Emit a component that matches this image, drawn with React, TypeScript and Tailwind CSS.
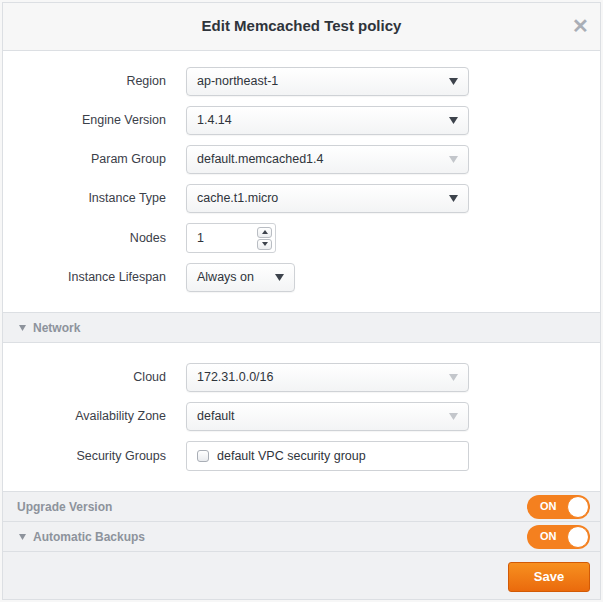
import React, { useState } from 'react';

interface FieldRow {
  label: string;
  value: string;
  disabled?: boolean;
}

const mainFields: FieldRow[] = [
  { label: 'Region', value: 'ap-northeast-1' },
  { label: 'Engine Version', value: '1.4.14' },
  { label: 'Param Group', value: 'default.memcached1.4', disabled: true },
  { label: 'Instance Type', value: 'cache.t1.micro' },
];

const networkFields: FieldRow[] = [
  { label: 'Cloud', value: '172.31.0.0/16', disabled: true },
  { label: 'Availability Zone', value: 'default', disabled: true },
];

const Caret: React.FC<{ light?: boolean }> = ({ light }) => (
  <svg width="9" height="7" viewBox="0 0 9 7" className={light ? 'text-[#c3c6cb]' : 'text-[#3d434c]'}>
    <path d="M0 0 H9 L4.5 7 Z" fill="currentColor" />
  </svg>
);

// little triangle in front of the section headers
const SectionCaret: React.FC = () => (
  <svg width="7" height="6" viewBox="0 0 7 6">
    <path d="M0 0 H7 L3.5 6 Z" fill="#8d939c" />
  </svg>
);

const Label: React.FC<{ children: React.ReactNode }> = ({ children }) => (
  <div className="w-[163px] shrink-0 text-right text-[12.5px] text-[#3b4049]">{children}</div>
);

const SelectBox: React.FC<{ value: string; light?: boolean; width?: string }> = ({ value, light, width = 'w-[283px]' }) => (
  <div
    className={`${width} h-[29px] flex items-center justify-between pl-[10px] pr-[10px] rounded-[4px] border border-[#cfd2d6] bg-gradient-to-b from-white to-[#f3f4f5] shadow-[0_1px_1px_rgba(0,0,0,0.04)] text-[12.5px] text-[#2f343b]`}
  >
    <span>{value}</span>
    <Caret light={light} />
  </div>
);

const Toggle: React.FC<{ on: boolean; onClick: () => void }> = ({ on, onClick }) => (
  <button
    type="button"
    onClick={onClick}
    className={`w-[63px] h-[24px] rounded-full flex items-center justify-between pl-[13px] pr-[1px] ${on ? 'bg-[#f4801f]' : 'bg-[#c9ccd1]'}`}
  >
    <span className="text-[11px] font-bold text-white">{on ? 'ON' : 'OFF'}</span>
    <span className="w-[22px] h-[22px] rounded-full bg-white border border-[#f4801f]" />
  </button>
);

const App: React.FC = () => {
  const [upgrade, setUpgrade] = useState(true);
  const [backups, setBackups] = useState(true);
  const [nodes, setNodes] = useState(1);

  return (
    <div className="w-[603px] h-[602px] bg-[#f7f7f7] p-[2px]" style={{ fontFamily: '"Liberation Sans", Arial, sans-serif' }}>
      <div className="h-full flex flex-col border border-[#dcdfe3] bg-white">
        {/* header */}
        <div className="h-[48px] shrink-0 relative flex items-center justify-center bg-[#f7f7f7] border-b border-[#dcdfe3]">
          <h1 className="text-[15px] font-bold text-[#2f343b]">Edit Memcached Test policy</h1>
          <span className="absolute right-[11px] top-[13px] text-[20px] font-bold leading-none text-[#a9aeb6]">✕</span>
        </div>

        {/* instance settings */}
        <div className="flex flex-col gap-[10px] pt-[16px] pb-[20px] shrink-0">
          {mainFields.map((f) => (
            <div key={f.label} className="flex items-center gap-[20px]">
              <Label>{f.label}</Label>
              <SelectBox value={f.value} light={f.disabled} />
            </div>
          ))}
          <div className="flex items-center gap-[20px]">
            <Label>Nodes</Label>
            <div className="w-[90px] h-[30px] flex items-center justify-between pl-[10px] pr-[3px] rounded-[3px] border border-[#cfd2d6] bg-white text-[12.5px] text-[#2f343b]">
              <span>{nodes}</span>
              <div className="flex flex-col gap-[1px]">
                <button
                  type="button"
                  onClick={() => setNodes(nodes + 1)}
                  className="w-[15px] h-[11px] flex items-center justify-center rounded-[3px] border border-[#b9bdc3] bg-gradient-to-b from-white to-[#eceef0]"
                >
                  <svg width="6" height="4" viewBox="0 0 6 4"><path d="M0 4 L3 0 L6 4 Z" fill="#3d434c" /></svg>
                </button>
                <button
                  type="button"
                  onClick={() => setNodes(Math.max(1, nodes - 1))}
                  className="w-[15px] h-[11px] flex items-center justify-center rounded-[3px] border border-[#b9bdc3] bg-gradient-to-b from-white to-[#eceef0]"
                >
                  <svg width="6" height="4" viewBox="0 0 6 4"><path d="M0 0 H6 L3 4 Z" fill="#3d434c" /></svg>
                </button>
              </div>
            </div>
          </div>
          <div className="flex items-center gap-[20px]">
            <Label>Instance Lifespan</Label>
            <SelectBox value="Always on" width="w-[109px]" />
          </div>
        </div>

        {/* network section */}
        <div className="h-[31px] shrink-0 flex items-center gap-[7px] pl-[16px] bg-[#f0f1f3] border-y border-[#dcdfe3]">
          <SectionCaret />
          <span className="text-[12px] font-bold text-[#8d939c]">Network</span>
        </div>
        <div className="flex flex-col gap-[10px] pt-[20px] pb-[20px] shrink-0">
          {networkFields.map((f) => (
            <div key={f.label} className="flex items-center gap-[20px]">
              <Label>{f.label}</Label>
              <SelectBox value={f.value} light={f.disabled} />
            </div>
          ))}
          <div className="flex items-center gap-[20px]">
            <Label>Security Groups</Label>
            <div className="w-[283px] h-[30px] flex items-center gap-[8px] pl-[10px] rounded-[3px] border border-[#cfd2d6] bg-white text-[12.5px] text-[#2f343b]">
              <span className="w-[12px] h-[12px] rounded-[3px] border border-[#a9aeb6] bg-gradient-to-b from-white to-[#e9ebee]" />
              <span>default VPC security group</span>
            </div>
          </div>
        </div>

        {/* toggles */}
        <div className="h-[30px] shrink-0 flex items-center justify-between pl-[14px] pr-[10px] bg-[#f0f1f3] border-t border-[#dcdfe3]">
          <span className="text-[12px] font-bold text-[#8d939c]">Upgrade Version</span>
          <Toggle on={upgrade} onClick={() => setUpgrade(!upgrade)} />
        </div>
        <div className="h-[30px] shrink-0 flex items-center justify-between pl-[16px] pr-[10px] bg-[#f0f1f3] border-t border-[#dcdfe3]">
          <div className="flex items-center gap-[7px]">
            <SectionCaret />
            <span className="text-[12px] font-bold text-[#8d939c]">Automatic Backups</span>
          </div>
          <Toggle on={backups} onClick={() => setBackups(!backups)} />
        </div>

        {/* footer */}
        <div className="flex-1 flex items-start justify-end pt-[10px] pr-[10px] bg-[#f0f1f3] border-t border-[#dcdfe3]">
          <button
            type="button"
            className="w-[82px] h-[30px] rounded-[3px] border border-[#d25a06] bg-gradient-to-b from-[#f7901f] to-[#ea6a0c] text-[13px] font-bold text-white"
          >
            Save
          </button>
        </div>
      </div>
    </div>
  );
};

export default App;
